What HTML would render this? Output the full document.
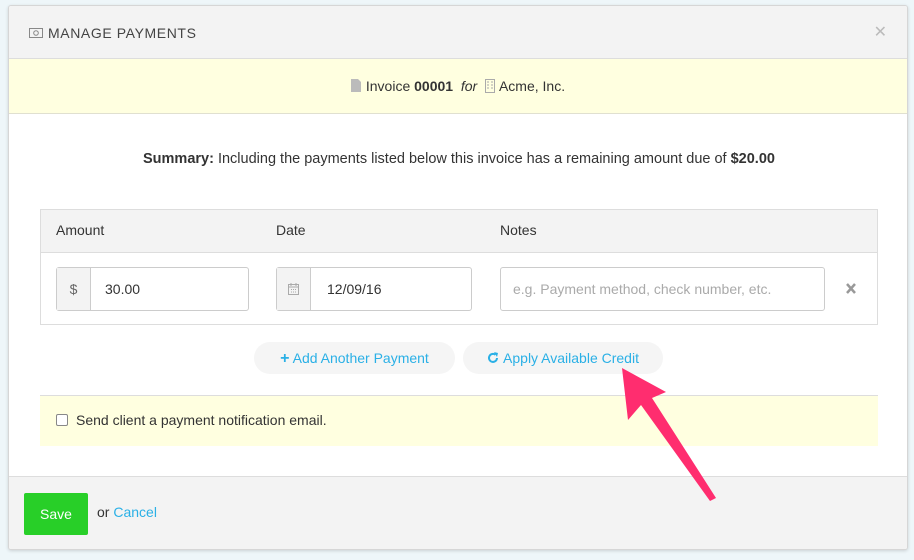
<!DOCTYPE html>
<html><head><meta charset="utf-8"><style>
*{box-sizing:border-box;margin:0;padding:0}
body{width:914px;height:560px;background:#eef6f9;font-family:"Liberation Sans",sans-serif;font-size:14px;color:#333;position:relative;overflow:hidden}
.modal{position:absolute;left:8px;top:5px;width:900px;height:545px;background:#fff;border:1px solid #d6d6d6;border-radius:3px;overflow:hidden;box-shadow:0 1px 3px rgba(0,0,0,.15)}
.hdr{height:53px;background:#f3f3f3;border-bottom:1px solid #ddd;position:relative}
.hdr .t{position:absolute;left:20px;top:19px;font-size:14px;letter-spacing:0.6px;color:#444}
.hdr .x{position:absolute;right:20px;top:16px;color:#bbb;font-size:16px}
.inv{height:55px;background:#ffffe0;border-bottom:1px solid #e0e0d0;text-align:center;line-height:54px;font-size:14px;color:#333}
.sum{position:absolute;top:145px;left:0;width:900px;text-align:center;font-size:14.5px}
.tbl{position:absolute;left:31px;top:203px;width:838px;height:116px;border:1px solid #ddd}
.th{height:43px;background:#f3f3f3;border-bottom:1px solid #ddd;position:relative}
.th span{position:absolute;top:12px;font-size:14px}
.inp{position:absolute;top:57px;height:44px;border:1px solid #ccc;border-radius:3px;background:#fff;font-size:14px;line-height:42px}
.inp .ad{position:absolute;left:0;top:0;bottom:0;width:34px;background:#f3f3f3;border-right:1px solid #ccc;text-align:center;color:#666}
.btn{position:absolute;top:336px;height:32px;border-radius:16px;background:#f5f5f5;color:#2ab0e6;font-size:14px;line-height:32px;text-align:center}
.note{position:absolute;left:31px;top:389px;width:838px;height:51px;background:#ffffe0;border-top:1px solid #ddd}
.ftr{position:absolute;left:0;top:470px;width:900px;height:75px;background:#f3f3f3;border-top:1px solid #ddd}
.save{position:absolute;left:15px;top:16px;width:64px;height:42px;background:#28cf28;color:#fff;border-radius:2px;text-align:center;line-height:42px;font-size:14px}
</style></head><body>
<div class="modal">
 <div class="hdr"><div class="t"><svg width="14" height="10" viewBox="0 0 14 10" style="vertical-align:0;margin-right:5px"><rect x="0.5" y="0.5" width="13" height="9" fill="none" stroke="#888"/><circle cx="7" cy="5" r="2.3" fill="none" stroke="#888"/></svg>MANAGE PAYMENTS</div><div class="x">✕</div></div>
 <div class="inv"><svg width="10" height="13" viewBox="0 0 10 13" style="vertical-align:-1px;margin-right:5px"><path d="M0 0H7L10 3V13H0Z" fill="#bbb"/></svg>Invoice <b>00001</b> &nbsp;<i>for</i> &nbsp;<svg width="10" height="14" viewBox="0 0 10 14" style="vertical-align:-2px;margin-right:4px"><rect x="0.5" y="0.5" width="9" height="13" fill="none" stroke="#aaa"/><path d="M2 3h2M6 3h2M2 6h2M6 6h2M2 9h2M6 9h2" stroke="#aaa"/></svg>Acme, Inc.</div>
 <div class="sum"><b>Summary:</b> Including the payments listed below this invoice has a remaining amount due of <b>$20.00</b></div>
 <div class="tbl">
  <div class="th"><span style="left:15px">Amount</span><span style="left:235px">Date</span><span style="left:459px">Notes</span></div>
  <div class="inp" style="left:15px;width:193px"><div class="ad">$</div><span style="position:absolute;left:48px">30.00</span></div>
  <div class="inp" style="left:235px;width:196px"><div class="ad"><svg width="11" height="12" viewBox="0 0 11 12" style="vertical-align:-1px"><rect x="0.5" y="1.5" width="10" height="10" fill="none" stroke="#aaa"/><path d="M0 4h11M3 6.5h1M5 6.5h1M7 6.5h1M3 9h1M5 9h1M7 9h1M3 0v3M8 0v3" stroke="#aaa"/></svg></div><span style="position:absolute;left:50px">12/09/16</span></div>
  <div class="inp" style="left:459px;width:325px;color:#aaa;padding-left:12px">e.g. Payment method, check number, etc.</div>
  <svg style="position:absolute;left:805px;top:73px" width="10" height="11" viewBox="0 0 10 11"><path d="M1 1L9 10M9 1L1 10" stroke="#999" stroke-width="2.5"/></svg>
 </div>
 <div class="btn" style="left:245px;width:201px"><b style="font-size:16px">+</b> Add Another Payment</div>
 <div class="btn" style="left:454px;width:200px"><svg width="12" height="12" viewBox="0 0 12 12" style="vertical-align:-1px;margin-right:4px"><path d="M10 6A4 4 0 1 1 8.5 2.8" fill="none" stroke="#2ab0e6" stroke-width="2"/><path d="M7 0L11 1L10 5Z" fill="#2ab0e6"/></svg>Apply Available Credit</div>
 <div class="note"><span style="position:absolute;left:16px;top:18px;width:12px;height:12px;border:1px solid #888;border-radius:2px;background:#fff"></span><span style="position:absolute;left:36px;top:16px">Send client a payment notification email.</span></div>
 <div class="ftr"><div class="save">Save</div><span style="position:absolute;left:88px;top:27px">or <span style="color:#2ab0e6">Cancel</span></span></div>
</div>
<svg style="position:absolute;left:0;top:0" width="914" height="560"><path d="M622 368L666 392L652 398L716 498L710 501L641 405L628 420Z" fill="#ff2d6f"/></svg>
</body></html>
